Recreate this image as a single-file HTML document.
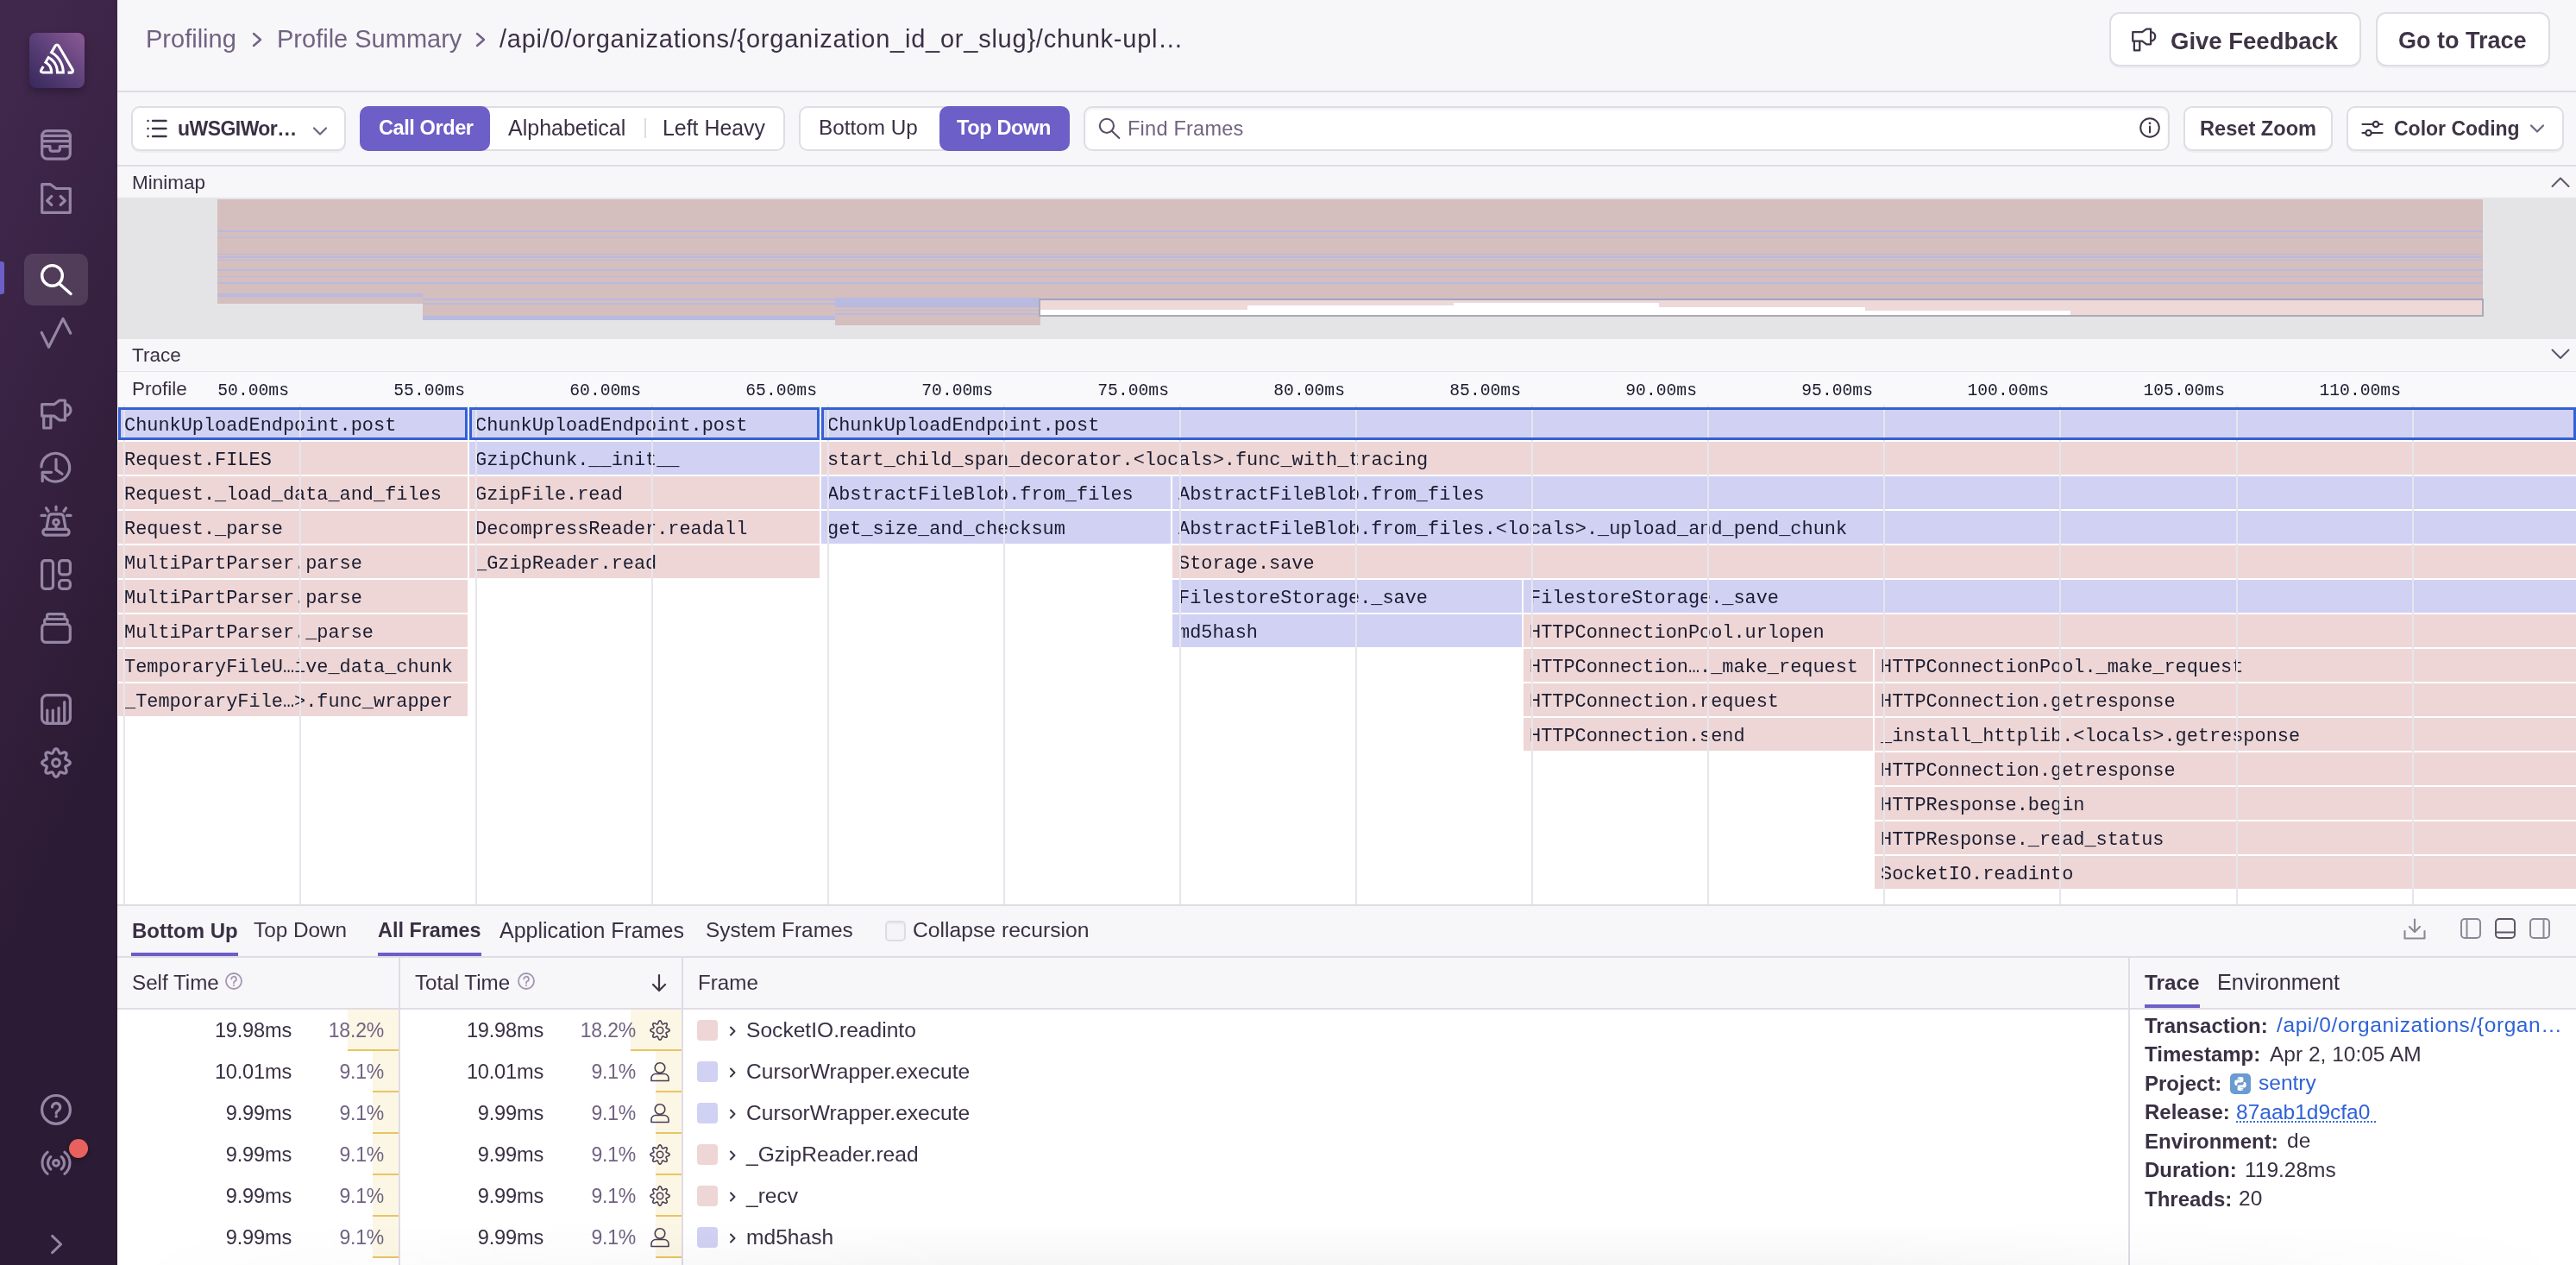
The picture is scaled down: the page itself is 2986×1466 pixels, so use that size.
<!DOCTYPE html><html><head><meta charset="utf-8"><title>Profile</title><style>
*{box-sizing:border-box;margin:0;padding:0}
html,body{width:2986px;height:1466px;overflow:hidden;background:#fff;position:relative;font-family:"Liberation Sans",sans-serif}
.a{position:absolute}
.t{position:absolute;line-height:1;white-space:nowrap;will-change:transform}
</style></head><body>
<div class="a" style="left:0px;top:0px;width:136px;height:1466px;background:linear-gradient(294.17deg,#2c1b34 35.57%,#40274c 92.42%)"></div>
<div class="a" style="left:34px;top:38px;width:64px;height:64px;border-radius:8px;background:linear-gradient(225deg,#8c5b96 0%,#5c4079 50%,#35285a 100%);box-shadow:0 4px 8px rgba(0,0,0,0.25)"></div>
<svg class="a" style="left:46px;top:50px;overflow:visible;" width="40" height="36" viewBox="0 0 50 44" fill="none"><path fill="#fff" d="M29,2.26a4.67,4.67,0,0,0-8,0L14.42,13.53A32.21,32.21,0,0,1,32.17,40.19H27.55A27.68,27.68,0,0,0,12.09,17.47L6,28a15.92,15.92,0,0,1,9.23,12.17H4.62A.76.76,0,0,1,4,39.06l2.94-5a10.74,10.74,0,0,0-3.360-1.9l-2.91,5a4.54,4.54,0,0,0,1.69,6.24A4.66,4.66,0,0,0,4.62,44H19.150a19.4,19.4,0,0,0-8-17.31l2.31-4A23.87,23.87,0,0,1,23.76,44H36.07a35.88,35.88,0,0,0-16.41-31.8l4.670-8a.77.77,0,0,1,1.05-.27c.53.29,20.29,34.77,20.66,35.170a.76.76,0,0,1-.68,1.130H40.6q.09,1.91,0,3.810h4.78A4.59,4.59,0,0,0,50,39.43a4.49,4.49,0,0,0-.62-2.28Z"/></svg>
<div class="a" style="left:28px;top:294px;width:74px;height:60px;border-radius:10px;background:rgba(255,255,255,0.12)"></div>
<div class="a" style="left:0px;top:303px;width:5px;height:38px;background:#6C5FC7;border-radius:0 3px 3px 0"></div>
<svg class="a" style="left:47px;top:150px;overflow:visible;" width="36" height="36" viewBox="0 0 36 36" fill="none"><g stroke="#9686A6" stroke-width="3.2" stroke-linecap="round" stroke-linejoin="round"><rect x="1.7" y="1.6" width="32.6" height="32.6" rx="6"/><line x1="1.7" y1="7.3" x2="34.3" y2="7.3"/><line x1="1.7" y1="13.6" x2="34.3" y2="13.6"/><path d="M1.7 19.7H11V23A2 2 0 0 0 13 25.2H20.3A2 2 0 0 0 22.3 23V19.7H34.3"/></g></svg>
<svg class="a" style="left:47px;top:212px;overflow:visible;" width="36" height="36" viewBox="0 0 36 36" fill="none"><g stroke="#9686A6" stroke-width="3.2" stroke-linecap="round" stroke-linejoin="round"><path d="M1.7 34.3V1.7H11.5L18 6.5H34.3V34.3Z"/><path d="M12.8 15.5L7.6 20.6L12.8 25.5"/><path d="M23.2 15.5L28.4 20.6L23.2 25.5"/></g></svg>
<svg class="a" style="left:47px;top:306px;overflow:visible;" width="36" height="36" viewBox="0 0 36 36" fill="none"><g stroke="#fff" stroke-width="3.4" stroke-linecap="round"><circle cx="13.5" cy="13.4" r="11.8"/><line x1="22" y1="23" x2="35" y2="34.5"/></g></svg>
<svg class="a" style="left:47px;top:368px;overflow:visible;" width="36" height="36" viewBox="0 0 36 36" fill="none"><g stroke="#9686A6" stroke-width="3.2" stroke-linecap="round" stroke-linejoin="round"><path d="M1.2 17.4L9.5 34.2L26 1.4L34.8 18.2"/></g></svg>
<svg class="a" style="left:47px;top:462px;overflow:visible;" width="36" height="36" viewBox="0 0 36 36" fill="none"><g stroke="#9686A6" stroke-width="3.2" stroke-linecap="round" stroke-linejoin="round"><path d="M1.6 6.7H15.6L22 2H28.4V24.9H22L15.6 20.1H1.6Z"/><path d="M3.7 20.1V34H11.9V20.1"/><path d="M28.4 6.6A6.6 6.6 0 0 1 28.4 19.8"/></g></svg>
<svg class="a" style="left:47px;top:524px;overflow:visible;" width="36" height="36" viewBox="0 0 36 36" fill="none"><g stroke="#9686A6" stroke-width="3.2" stroke-linecap="round" stroke-linejoin="round"><path d="M0.9 17A16.4 16.4 0 1 1 4.5 28"/><path d="M12.6 23.3H2.2V33.6"/><path d="M18 8.4V20.4L25 25.3"/></g></svg>
<svg class="a" style="left:47px;top:586px;overflow:visible;" width="36" height="36" viewBox="0 0 36 36" fill="none"><g stroke="#9686A6" stroke-width="3.2" stroke-linecap="round" stroke-linejoin="round"><rect x="2.9" y="27.3" width="30.2" height="6.8" rx="3"/><path d="M6.8 27.3L9.3 13A4 4 0 0 1 13.3 9.9H22.7A4 4 0 0 1 26.7 13L29.2 27.3"/><circle cx="18" cy="19.2" r="3.2"/><line x1="18" y1="22.4" x2="18" y2="27.3"/><line x1="18" y1="1.2" x2="18" y2="5"/><line x1="6.5" y1="2.8" x2="9" y2="6.5"/><line x1="29.5" y1="2.8" x2="27" y2="6.5"/><line x1="1" y1="11.4" x2="5.5" y2="11.4"/><line x1="30.5" y1="11.4" x2="35" y2="11.4"/></g></svg>
<svg class="a" style="left:47px;top:648px;overflow:visible;" width="36" height="36" viewBox="0 0 36 36" fill="none"><g stroke="#9686A6" stroke-width="3.2" stroke-linecap="round" stroke-linejoin="round"><rect x="1.6" y="1.6" width="12.9" height="32.7" rx="3.5"/><rect x="21.6" y="1.6" width="12.8" height="16.2" rx="3.5"/><rect x="21.6" y="24.5" width="12.8" height="9.8" rx="3.5"/></g></svg>
<svg class="a" style="left:47px;top:710px;overflow:visible;" width="36" height="36" viewBox="0 0 36 36" fill="none"><g stroke="#9686A6" stroke-width="3.2" stroke-linecap="round" stroke-linejoin="round"><rect x="1.7" y="13.5" width="32.6" height="20.8" rx="4"/><path d="M4.7 13.5V9.5A2 2 0 0 1 6.7 7.5H29.1A2 2 0 0 1 31.1 9.5V13.5"/><path d="M7.6 7.5V3.6A2 2 0 0 1 9.6 1.6H26.1A2 2 0 0 1 28.1 3.6V7.5"/></g></svg>
<svg class="a" style="left:47px;top:804px;overflow:visible;" width="36" height="36" viewBox="0 0 36 36" fill="none"><g stroke="#9686A6" stroke-width="3.2" stroke-linecap="round" stroke-linejoin="round"><rect x="1.6" y="1.6" width="32.8" height="32.8" rx="6"/><line x1="7.8" y1="19.2" x2="7.8" y2="34"/><line x1="14.3" y1="19.2" x2="14.3" y2="34"/><line x1="21.1" y1="16.3" x2="21.1" y2="34"/><line x1="27.7" y1="9.7" x2="27.7" y2="34"/></g></svg>
<svg class="a" style="left:47px;top:866px;overflow:visible;" width="36" height="36" viewBox="0 0 36 36" fill="none"><g stroke="#9686A6" stroke-width="3.2" stroke-linecap="round" stroke-linejoin="round"><path d="M18.00 1.70 L18.64 1.83 L19.24 2.19 L19.80 2.75 L20.30 3.47 L20.73 4.27 L21.10 5.08 L21.43 5.83 L21.75 6.45 L22.09 6.92 L22.48 7.19 L22.95 7.27 L23.51 7.18 L24.18 6.96 L24.94 6.67 L25.78 6.36 L26.65 6.10 L27.50 5.94 L28.30 5.94 L28.99 6.11 L29.53 6.47 L29.89 7.01 L30.06 7.70 L30.06 8.50 L29.90 9.35 L29.64 10.22 L29.33 11.06 L29.04 11.82 L28.82 12.49 L28.73 13.05 L28.81 13.52 L29.08 13.91 L29.55 14.25 L30.17 14.57 L30.92 14.90 L31.73 15.27 L32.53 15.70 L33.25 16.20 L33.81 16.76 L34.17 17.36 L34.30 18.00 L34.17 18.64 L33.81 19.24 L33.25 19.80 L32.53 20.30 L31.73 20.73 L30.92 21.10 L30.17 21.43 L29.55 21.75 L29.08 22.09 L28.81 22.48 L28.73 22.95 L28.82 23.51 L29.04 24.18 L29.33 24.94 L29.64 25.78 L29.90 26.65 L30.06 27.50 L30.06 28.30 L29.89 28.99 L29.53 29.53 L28.99 29.89 L28.30 30.06 L27.50 30.06 L26.65 29.90 L25.78 29.64 L24.94 29.33 L24.18 29.04 L23.51 28.82 L22.95 28.73 L22.48 28.81 L22.09 29.08 L21.75 29.55 L21.43 30.17 L21.10 30.92 L20.73 31.73 L20.30 32.53 L19.80 33.25 L19.24 33.81 L18.64 34.17 L18.00 34.30 L17.36 34.17 L16.76 33.81 L16.20 33.25 L15.70 32.53 L15.27 31.73 L14.90 30.92 L14.57 30.17 L14.25 29.55 L13.91 29.08 L13.52 28.81 L13.05 28.73 L12.49 28.82 L11.82 29.04 L11.06 29.33 L10.22 29.64 L9.35 29.90 L8.50 30.06 L7.70 30.06 L7.01 29.89 L6.47 29.53 L6.11 28.99 L5.94 28.30 L5.94 27.50 L6.10 26.65 L6.36 25.78 L6.67 24.94 L6.96 24.18 L7.18 23.51 L7.27 22.95 L7.19 22.48 L6.92 22.09 L6.45 21.75 L5.83 21.43 L5.08 21.10 L4.27 20.73 L3.47 20.30 L2.75 19.80 L2.19 19.24 L1.83 18.64 L1.70 18.00 L1.83 17.36 L2.19 16.76 L2.75 16.20 L3.47 15.70 L4.27 15.27 L5.08 14.90 L5.83 14.57 L6.45 14.25 L6.92 13.91 L7.19 13.52 L7.27 13.05 L7.18 12.49 L6.96 11.82 L6.67 11.06 L6.36 10.22 L6.10 9.35 L5.94 8.50 L5.94 7.70 L6.11 7.01 L6.47 6.47 L7.01 6.11 L7.70 5.94 L8.50 5.94 L9.35 6.10 L10.22 6.36 L11.06 6.67 L11.82 6.96 L12.49 7.18 L13.05 7.27 L13.52 7.19 L13.91 6.92 L14.25 6.45 L14.57 5.83 L14.90 5.08 L15.27 4.27 L15.70 3.47 L16.20 2.75 L16.76 2.19 L17.36 1.83 L18.00 1.70Z"/><circle cx="18" cy="18" r="4.3"/></g></svg>
<svg class="a" style="left:47px;top:1268px;overflow:visible;" width="36" height="36" viewBox="0 0 36 36" fill="none"><g stroke="#9686A6" stroke-width="3.2" stroke-linecap="round" stroke-linejoin="round"><circle cx="18" cy="17.9" r="16.4"/><path d="M13.5 15A4.6 4.6 0 1 1 20.6 18.9C19.3 19.8 18.2 20.6 18.2 22.3"/></g></svg>
<svg class="a" style="left:47px;top:1268px;overflow:visible;" width="36" height="36" viewBox="0 0 36 36" fill="none"><circle cx="18.2" cy="25.7" r="1.8" fill="#9686A6"/></svg>
<svg class="a" style="left:47px;top:1330px;overflow:visible;" width="36" height="36" viewBox="0 0 36 36" fill="none"><g stroke="#9686A6" stroke-width="3" stroke-linecap="round"><circle cx="18" cy="17.8" r="3.4"/><path d="M11.9 10.5A9.5 9.5 0 0 0 11.9 25.1"/><path d="M24.1 10.5A9.5 9.5 0 0 1 24.1 25.1"/><path d="M8.15 5.2A16 16 0 0 0 8.15 30.4"/><path d="M27.85 5.2A16 16 0 0 1 27.85 30.4"/></g></svg>
<div class="a" style="left:80px;top:1320px;width:22px;height:22px;border-radius:50%;background:#E8615F;box-shadow:0 2px 6px rgba(0,0,0,0.3)"></div>
<svg class="a" style="left:57px;top:1429px;overflow:visible;" width="18" height="26" viewBox="0 0 18 26" fill="none"><path d="M3.6 3.3L13.6 13L3.6 22.7" stroke="#9686A6" stroke-width="3" stroke-linecap="round" stroke-linejoin="round"/></svg>
<div class="a" style="left:136px;top:0px;width:2850px;height:105px;background:#F7F6F9"></div>
<div class="a" style="left:136px;top:105px;width:2850px;height:2px;background:#E0DCE5"></div>
<div class="t" style="top:31.35px;font-size:29px;color:#716382;font-weight:400;font-family:'Liberation Sans',sans-serif;left:169.00px;">Profiling</div>
<svg class="a" style="left:291px;top:37px;overflow:visible;" width="14" height="18" viewBox="0 0 14 18" fill="none"><path d="M3 2L11 9L3 16" stroke="#716382" stroke-width="2.4" stroke-linecap="round" stroke-linejoin="round"/></svg>
<div class="t" style="top:31.35px;font-size:29px;color:#716382;font-weight:400;font-family:'Liberation Sans',sans-serif;left:321.00px;">Profile Summary</div>
<svg class="a" style="left:550px;top:37px;overflow:visible;" width="14" height="18" viewBox="0 0 14 18" fill="none"><path d="M3 2L11 9L3 16" stroke="#716382" stroke-width="2.4" stroke-linecap="round" stroke-linejoin="round"/></svg>
<div class="t" style="top:31.35px;font-size:29px;color:#3A3044;font-weight:400;font-family:'Liberation Sans',sans-serif;letter-spacing:0.76px;left:579.00px;">/api/0/organizations/{organization_id_or_slug}/chunk-upl…</div>
<div class="a" style="left:2445px;top:14px;width:292px;height:63px;background:#fff;border:2px solid #E0DCE5;border-radius:12px;box-shadow:0 2px 0 rgba(43,34,51,0.04)"></div>
<svg class="a" style="left:2471px;top:32px;overflow:visible;" width="28" height="28" viewBox="0 0 36 36" fill="none"><g stroke="#3E3446" stroke-width="2.9" stroke-linejoin="round"><path d="M1.6 6.7H15.6L22 2H28.4V24.9H22L15.6 20.1H1.6Z"/><path d="M3.7 20.1V34H11.9V20.1"/><path d="M28.4 6.6A6.6 6.6 0 0 1 28.4 19.8"/></g></svg>
<div class="t" style="top:33.62px;font-size:27.5px;color:#3E3446;font-weight:700;font-family:'Liberation Sans',sans-serif;left:2516.00px;">Give Feedback</div>
<div class="a" style="left:2754px;top:14px;width:202px;height:63px;background:#fff;border:2px solid #E0DCE5;border-radius:12px;box-shadow:0 2px 0 rgba(43,34,51,0.04)"></div>
<div class="t" style="top:34.04px;font-size:27px;color:#3E3446;font-weight:700;font-family:'Liberation Sans',sans-serif;left:2780.00px;">Go to Trace</div>
<div class="a" style="left:136px;top:107px;width:2850px;height:84px;background:#F7F6F9"></div>
<div class="a" style="left:136px;top:191px;width:2850px;height:2px;background:#E0DCE5"></div>
<div class="a" style="left:152px;top:123px;width:249px;height:52px;background:#fff;border:2px solid #E0DCE5;border-radius:10px;box-shadow:0 2px 0 rgba(43,34,51,0.04)"></div>
<svg class="a" style="left:170px;top:138px;overflow:visible;" width="24" height="22" viewBox="0 0 24 22" fill="none"><g stroke="#3E3446" stroke-width="2.4" stroke-linecap="round"><line x1="1.5" y1="2" x2="1.6" y2="2"/><line x1="1.5" y1="11" x2="1.6" y2="11"/><line x1="1.5" y1="20" x2="1.6" y2="20"/><line x1="7" y1="2" x2="22.5" y2="2"/><line x1="7" y1="11" x2="22.5" y2="11"/><line x1="7" y1="20" x2="22.5" y2="20"/></g></svg>
<div class="t" style="top:138.43px;font-size:23px;color:#3A3044;font-weight:700;font-family:'Liberation Sans',sans-serif;letter-spacing:-0.55px;left:206.00px;">uWSGIWor…</div>
<svg class="a" style="left:362px;top:146px;overflow:visible;" width="18" height="12" viewBox="0 0 18 12" fill="none"><path d="M2 2.5L9 9.5L16 2.5" stroke="#716382" stroke-width="2.2" stroke-linecap="round" stroke-linejoin="round"/></svg>
<div class="a" style="left:417px;top:123px;width:493px;height:52px;background:#fff;border:2px solid #E0DCE5;border-radius:10px"></div>
<div class="a" style="left:417px;top:123px;width:151px;height:52px;background:#6C5FC7;border-radius:10px"></div>
<div class="t" style="top:136.52px;font-size:23.6px;color:#fff;font-weight:700;font-family:'Liberation Sans',sans-serif;letter-spacing:-0.45px;left:439.00px;">Call Order</div>
<div class="t" style="top:135.73px;font-size:25px;color:#3A3044;font-weight:400;font-family:'Liberation Sans',sans-serif;left:589.00px;">Alphabetical</div>
<div class="a" style="left:747px;top:137px;width:2px;height:23px;background:#E0DCE5"></div>
<div class="t" style="top:135.82px;font-size:24.9px;color:#3A3044;font-weight:400;font-family:'Liberation Sans',sans-serif;left:768.00px;">Left Heavy</div>
<div class="a" style="left:926px;top:123px;width:314px;height:52px;background:#fff;border:2px solid #E0DCE5;border-radius:10px"></div>
<div class="t" style="top:136.33px;font-size:24.3px;color:#3A3044;font-weight:400;font-family:'Liberation Sans',sans-serif;left:949.00px;">Bottom Up</div>
<div class="a" style="left:1089px;top:123px;width:151px;height:52px;background:#6C5FC7;border-radius:10px"></div>
<div class="t" style="top:136.52px;font-size:23.6px;color:#fff;font-weight:700;font-family:'Liberation Sans',sans-serif;letter-spacing:-0.4px;left:1109.00px;">Top Down</div>
<div class="a" style="left:1256px;top:123px;width:1259px;height:52px;background:#fff;border:2px solid #E0DCE5;border-radius:10px;box-shadow:inset 0 2px 3px rgba(43,34,51,0.06)"></div>
<svg class="a" style="left:1273px;top:136px;overflow:visible;" width="26" height="26" viewBox="0 0 26 26" fill="none"><g stroke="#5A4D66" stroke-width="2.1" stroke-linecap="round"><circle cx="9.9" cy="9.85" r="8.1"/><line x1="15.7" y1="15.7" x2="24.3" y2="24"/></g></svg>
<div class="t" style="top:137.72px;font-size:23.6px;color:#716380;font-weight:400;font-family:'Liberation Sans',sans-serif;letter-spacing:0.2px;left:1307.00px;">Find Frames</div>
<svg class="a" style="left:2480px;top:136px;overflow:visible;" width="24" height="24" viewBox="0 0 24 24" fill="none"><g stroke="#3E3446" stroke-width="2" stroke-linecap="round"><circle cx="12" cy="12" r="10.8"/><line x1="12" y1="10.5" x2="12" y2="17.5"/></g><circle cx="12" cy="6.8" r="1.4" fill="#3E3446"/></svg>
<div class="a" style="left:2531px;top:123px;width:173px;height:52px;background:#fff;border:2px solid #E0DCE5;border-radius:10px;box-shadow:0 2px 0 rgba(43,34,51,0.04)"></div>
<div class="t" style="top:137.92px;font-size:23.6px;color:#3E3446;font-weight:700;font-family:'Liberation Sans',sans-serif;left:2550.00px;">Reset Zoom</div>
<div class="a" style="left:2720px;top:123px;width:252px;height:52px;background:#fff;border:2px solid #E0DCE5;border-radius:10px;box-shadow:0 2px 0 rgba(43,34,51,0.04)"></div>
<svg class="a" style="left:2737px;top:139px;overflow:visible;" width="26" height="20" viewBox="0 0 26 20" fill="none"><g stroke="#3E3446" stroke-width="2.2" stroke-linecap="round"><line x1="1.5" y1="5" x2="24.5" y2="5"/><line x1="1.5" y1="15" x2="24.5" y2="15"/><circle cx="17" cy="5" r="3.2" fill="#fff"/><circle cx="8.5" cy="15" r="3.2" fill="#fff"/></g></svg>
<div class="t" style="top:138.43px;font-size:23px;color:#3E3446;font-weight:700;font-family:'Liberation Sans',sans-serif;left:2775.00px;">Color Coding</div>
<svg class="a" style="left:2932px;top:143px;overflow:visible;" width="18" height="12" viewBox="0 0 18 12" fill="none"><path d="M2 2.5L9 9.5L16 2.5" stroke="#716382" stroke-width="2.2" stroke-linecap="round" stroke-linejoin="round"/></svg>
<div class="a" style="left:136px;top:193px;width:2850px;height:37px;background:#F7F6F9"></div>
<div class="t" style="top:200.85px;font-size:22.5px;color:#3A3044;font-weight:400;font-family:'Liberation Sans',sans-serif;left:153.00px;">Minimap</div>
<svg class="a" style="left:2957px;top:203px;overflow:visible;" width="22" height="16" viewBox="0 0 22 16" fill="none"><path d="M1.5 13L11 3.5L20.5 13" stroke="#5F5369" stroke-width="2" stroke-linecap="round" stroke-linejoin="round"/></svg>
<div class="a" style="left:136px;top:229px;width:2850px;height:164px;background:#E4E4E6"></div>
<div class="a" style="left:252px;top:231px;width:238px;height:121px;background:#D5BEBE"></div>
<div class="a" style="left:490px;top:231px;width:478px;height:140px;background:#D5BEBE"></div>
<div class="a" style="left:968px;top:231px;width:238px;height:146px;background:#D5BEBE"></div>
<div class="a" style="left:1206px;top:231px;width:1672px;height:115px;background:#D5BEBE"></div>
<div class="a" style="left:252px;top:267px;width:2626px;height:2px;background:#B8BAE0"></div>
<div class="a" style="left:252px;top:275px;width:2626px;height:1px;background:#B8BAE0"></div>
<div class="a" style="left:252px;top:294px;width:2626px;height:1px;background:#B8BAE0"></div>
<div class="a" style="left:252px;top:297px;width:2626px;height:2px;background:#B8BAE0"></div>
<div class="a" style="left:252px;top:301px;width:2626px;height:1px;background:#B8BAE0"></div>
<div class="a" style="left:252px;top:312px;width:2626px;height:2px;background:#B8BAE0"></div>
<div class="a" style="left:252px;top:320px;width:2626px;height:1px;background:#B8BAE0"></div>
<div class="a" style="left:252px;top:327px;width:2626px;height:2px;background:#B8BAE0"></div>
<div class="a" style="left:252px;top:340px;width:238px;height:4px;background:#B8BAE0"></div>
<div class="a" style="left:490px;top:346px;width:478px;height:2px;background:#B8BAE0"></div>
<div class="a" style="left:490px;top:351px;width:478px;height:2px;background:#B8BAE0"></div>
<div class="a" style="left:490px;top:366px;width:478px;height:5px;background:#B8BAE0"></div>
<div class="a" style="left:968px;top:345px;width:238px;height:11px;background:#B8BAE0"></div>
<div class="a" style="left:968px;top:359px;width:238px;height:1px;background:#B8BAE0"></div>
<div class="a" style="left:968px;top:363px;width:238px;height:2px;background:#B8BAE0"></div>
<div class="a" style="left:1204px;top:346px;width:1675px;height:21px;background:#fff;border:2px solid #ABABB6;border-top-color:#A0A2C6"></div>
<div class="a" style="left:1206px;top:348px;width:240px;height:11px;background:#EED8D8"></div>
<div class="a" style="left:1446px;top:348px;width:239px;height:6px;background:#EED8D8"></div>
<div class="a" style="left:1685px;top:348px;width:238px;height:3px;background:#EED8D8"></div>
<div class="a" style="left:1923px;top:348px;width:239px;height:8px;background:#EED8D8"></div>
<div class="a" style="left:2162px;top:348px;width:238px;height:12px;background:#EED8D8"></div>
<div class="a" style="left:2400px;top:348px;width:477px;height:17px;background:#EED8D8"></div>
<div class="a" style="left:136px;top:393px;width:2850px;height:37px;background:#F7F6F9"></div>
<div class="t" style="top:400.85px;font-size:22.5px;color:#3A3044;font-weight:400;font-family:'Liberation Sans',sans-serif;left:153.00px;">Trace</div>
<svg class="a" style="left:2957px;top:403px;overflow:visible;" width="22" height="16" viewBox="0 0 22 16" fill="none"><path d="M1.5 2.5L11 12L20.5 2.5" stroke="#5F5369" stroke-width="2" stroke-linecap="round" stroke-linejoin="round"/></svg>
<div class="a" style="left:136px;top:430px;width:2850px;height:1px;background:#E6E3EA"></div>
<div class="a" style="left:136px;top:431px;width:2850px;height:41px;background:#F9F8FA"></div>
<div class="t" style="top:439.85px;font-size:22.5px;color:#3A3044;font-weight:400;font-family:'Liberation Sans',sans-serif;left:153.00px;">Profile</div>
<div class="t" style="top:443.81px;font-size:19.7px;color:#1B1C30;font-weight:400;font-family:'Liberation Mono',monospace;left:-1165.15px;width:1500px;text-align:right;">50.00ms</div>
<div class="t" style="top:443.81px;font-size:19.7px;color:#1B1C30;font-weight:400;font-family:'Liberation Mono',monospace;left:-961.10px;width:1500px;text-align:right;">55.00ms</div>
<div class="t" style="top:443.81px;font-size:19.7px;color:#1B1C30;font-weight:400;font-family:'Liberation Mono',monospace;left:-757.05px;width:1500px;text-align:right;">60.00ms</div>
<div class="t" style="top:443.81px;font-size:19.7px;color:#1B1C30;font-weight:400;font-family:'Liberation Mono',monospace;left:-553.00px;width:1500px;text-align:right;">65.00ms</div>
<div class="t" style="top:443.81px;font-size:19.7px;color:#1B1C30;font-weight:400;font-family:'Liberation Mono',monospace;left:-348.95px;width:1500px;text-align:right;">70.00ms</div>
<div class="t" style="top:443.81px;font-size:19.7px;color:#1B1C30;font-weight:400;font-family:'Liberation Mono',monospace;left:-144.90px;width:1500px;text-align:right;">75.00ms</div>
<div class="t" style="top:443.81px;font-size:19.7px;color:#1B1C30;font-weight:400;font-family:'Liberation Mono',monospace;left:59.15px;width:1500px;text-align:right;">80.00ms</div>
<div class="t" style="top:443.81px;font-size:19.7px;color:#1B1C30;font-weight:400;font-family:'Liberation Mono',monospace;left:263.20px;width:1500px;text-align:right;">85.00ms</div>
<div class="t" style="top:443.81px;font-size:19.7px;color:#1B1C30;font-weight:400;font-family:'Liberation Mono',monospace;left:467.25px;width:1500px;text-align:right;">90.00ms</div>
<div class="t" style="top:443.81px;font-size:19.7px;color:#1B1C30;font-weight:400;font-family:'Liberation Mono',monospace;left:671.30px;width:1500px;text-align:right;">95.00ms</div>
<div class="t" style="top:443.81px;font-size:19.7px;color:#1B1C30;font-weight:400;font-family:'Liberation Mono',monospace;left:875.35px;width:1500px;text-align:right;">100.00ms</div>
<div class="t" style="top:443.81px;font-size:19.7px;color:#1B1C30;font-weight:400;font-family:'Liberation Mono',monospace;left:1079.40px;width:1500px;text-align:right;">105.00ms</div>
<div class="t" style="top:443.81px;font-size:19.7px;color:#1B1C30;font-weight:400;font-family:'Liberation Mono',monospace;left:1283.45px;width:1500px;text-align:right;">110.00ms</div>
<div class="a" style="left:136px;top:472px;width:2850px;height:576px;background:#fff"></div>
<div class="a" style="left:137px;top:472px;width:405px;height:38px;background:#D0D1F3;overflow:hidden"><div class="t" style="left:7.4px;top:11.32px;font-family:'Liberation Mono',monospace;font-size:21.9px;color:#1B1C30">ChunkUploadEndpoint.post</div></div>
<div class="a" style="left:544px;top:472px;width:406px;height:38px;background:#D0D1F3;overflow:hidden"><div class="t" style="left:7.4px;top:11.32px;font-family:'Liberation Mono',monospace;font-size:21.9px;color:#1B1C30">ChunkUploadEndpoint.post</div></div>
<div class="a" style="left:952px;top:472px;width:2034px;height:38px;background:#D0D1F3;overflow:hidden"><div class="t" style="left:7.4px;top:11.32px;font-family:'Liberation Mono',monospace;font-size:21.9px;color:#1B1C30">ChunkUploadEndpoint.post</div></div>
<div class="a" style="left:137px;top:512px;width:405px;height:38px;background:#EED6D6;overflow:hidden"><div class="t" style="left:7.4px;top:11.32px;font-family:'Liberation Mono',monospace;font-size:21.9px;color:#1B1C30">Request.FILES</div></div>
<div class="a" style="left:137px;top:552px;width:405px;height:38px;background:#EED6D6;overflow:hidden"><div class="t" style="left:7.4px;top:11.32px;font-family:'Liberation Mono',monospace;font-size:21.9px;color:#1B1C30">Request._load_data_and_files</div></div>
<div class="a" style="left:137px;top:592px;width:405px;height:38px;background:#EED6D6;overflow:hidden"><div class="t" style="left:7.4px;top:11.32px;font-family:'Liberation Mono',monospace;font-size:21.9px;color:#1B1C30">Request._parse</div></div>
<div class="a" style="left:137px;top:632px;width:405px;height:38px;background:#EED6D6;overflow:hidden"><div class="t" style="left:7.4px;top:11.32px;font-family:'Liberation Mono',monospace;font-size:21.9px;color:#1B1C30">MultiPartParser.parse</div></div>
<div class="a" style="left:137px;top:672px;width:405px;height:38px;background:#EED6D6;overflow:hidden"><div class="t" style="left:7.4px;top:11.32px;font-family:'Liberation Mono',monospace;font-size:21.9px;color:#1B1C30">MultiPartParser.parse</div></div>
<div class="a" style="left:137px;top:712px;width:405px;height:38px;background:#EED6D6;overflow:hidden"><div class="t" style="left:7.4px;top:11.32px;font-family:'Liberation Mono',monospace;font-size:21.9px;color:#1B1C30">MultiPartParser._parse</div></div>
<div class="a" style="left:137px;top:752px;width:405px;height:38px;background:#EED6D6;overflow:hidden"><div class="t" style="left:7.4px;top:11.32px;font-family:'Liberation Mono',monospace;font-size:21.9px;color:#1B1C30">TemporaryFileU…ive_data_chunk</div></div>
<div class="a" style="left:137px;top:792px;width:405px;height:38px;background:#EED6D6;overflow:hidden"><div class="t" style="left:7.4px;top:11.32px;font-family:'Liberation Mono',monospace;font-size:21.9px;color:#1B1C30">_TemporaryFile…&gt;.func_wrapper</div></div>
<div class="a" style="left:544px;top:512px;width:406px;height:38px;background:#D0D1F3;overflow:hidden"><div class="t" style="left:7.4px;top:11.32px;font-family:'Liberation Mono',monospace;font-size:21.9px;color:#1B1C30">GzipChunk.__init__</div></div>
<div class="a" style="left:544px;top:552px;width:406px;height:38px;background:#EED6D6;overflow:hidden"><div class="t" style="left:7.4px;top:11.32px;font-family:'Liberation Mono',monospace;font-size:21.9px;color:#1B1C30">GzipFile.read</div></div>
<div class="a" style="left:544px;top:592px;width:406px;height:38px;background:#EED6D6;overflow:hidden"><div class="t" style="left:7.4px;top:11.32px;font-family:'Liberation Mono',monospace;font-size:21.9px;color:#1B1C30">DecompressReader.readall</div></div>
<div class="a" style="left:544px;top:632px;width:406px;height:38px;background:#EED6D6;overflow:hidden"><div class="t" style="left:7.4px;top:11.32px;font-family:'Liberation Mono',monospace;font-size:21.9px;color:#1B1C30">_GzipReader.read</div></div>
<div class="a" style="left:952px;top:512px;width:2034px;height:38px;background:#EED6D6;overflow:hidden"><div class="t" style="left:7.4px;top:11.32px;font-family:'Liberation Mono',monospace;font-size:21.9px;color:#1B1C30">start_child_span_decorator.&lt;locals&gt;.func_with_tracing</div></div>
<div class="a" style="left:952px;top:552px;width:405px;height:38px;background:#D0D1F3;overflow:hidden"><div class="t" style="left:7.4px;top:11.32px;font-family:'Liberation Mono',monospace;font-size:21.9px;color:#1B1C30">AbstractFileBlob.from_files</div></div>
<div class="a" style="left:952px;top:592px;width:405px;height:38px;background:#D0D1F3;overflow:hidden"><div class="t" style="left:7.4px;top:11.32px;font-family:'Liberation Mono',monospace;font-size:21.9px;color:#1B1C30">get_size_and_checksum</div></div>
<div class="a" style="left:1359px;top:552px;width:1627px;height:38px;background:#D0D1F3;overflow:hidden"><div class="t" style="left:7.4px;top:11.32px;font-family:'Liberation Mono',monospace;font-size:21.9px;color:#1B1C30">AbstractFileBlob.from_files</div></div>
<div class="a" style="left:1359px;top:592px;width:1627px;height:38px;background:#D0D1F3;overflow:hidden"><div class="t" style="left:7.4px;top:11.32px;font-family:'Liberation Mono',monospace;font-size:21.9px;color:#1B1C30">AbstractFileBlob.from_files.&lt;locals&gt;._upload_and_pend_chunk</div></div>
<div class="a" style="left:1359px;top:632px;width:1627px;height:38px;background:#EED6D6;overflow:hidden"><div class="t" style="left:7.4px;top:11.32px;font-family:'Liberation Mono',monospace;font-size:21.9px;color:#1B1C30">Storage.save</div></div>
<div class="a" style="left:1359px;top:672px;width:405px;height:38px;background:#D0D1F3;overflow:hidden"><div class="t" style="left:7.4px;top:11.32px;font-family:'Liberation Mono',monospace;font-size:21.9px;color:#1B1C30">FilestoreStorage._save</div></div>
<div class="a" style="left:1359px;top:712px;width:405px;height:38px;background:#D0D1F3;overflow:hidden"><div class="t" style="left:7.4px;top:11.32px;font-family:'Liberation Mono',monospace;font-size:21.9px;color:#1B1C30">md5hash</div></div>
<div class="a" style="left:1766px;top:672px;width:1220px;height:38px;background:#D0D1F3;overflow:hidden"><div class="t" style="left:7.4px;top:11.32px;font-family:'Liberation Mono',monospace;font-size:21.9px;color:#1B1C30">FilestoreStorage._save</div></div>
<div class="a" style="left:1766px;top:712px;width:1220px;height:38px;background:#EED6D6;overflow:hidden"><div class="t" style="left:7.4px;top:11.32px;font-family:'Liberation Mono',monospace;font-size:21.9px;color:#1B1C30">HTTPConnectionPool.urlopen</div></div>
<div class="a" style="left:1766px;top:752px;width:405px;height:38px;background:#EED6D6;overflow:hidden"><div class="t" style="left:7.4px;top:11.32px;font-family:'Liberation Mono',monospace;font-size:21.9px;color:#1B1C30">HTTPConnection…._make_request</div></div>
<div class="a" style="left:1766px;top:792px;width:405px;height:38px;background:#EED6D6;overflow:hidden"><div class="t" style="left:7.4px;top:11.32px;font-family:'Liberation Mono',monospace;font-size:21.9px;color:#1B1C30">HTTPConnection.request</div></div>
<div class="a" style="left:1766px;top:832px;width:405px;height:38px;background:#EED6D6;overflow:hidden"><div class="t" style="left:7.4px;top:11.32px;font-family:'Liberation Mono',monospace;font-size:21.9px;color:#1B1C30">HTTPConnection.send</div></div>
<div class="a" style="left:2173px;top:752px;width:813px;height:38px;background:#EED6D6;overflow:hidden"><div class="t" style="left:7.4px;top:11.32px;font-family:'Liberation Mono',monospace;font-size:21.9px;color:#1B1C30">HTTPConnectionPool._make_request</div></div>
<div class="a" style="left:2173px;top:792px;width:813px;height:38px;background:#EED6D6;overflow:hidden"><div class="t" style="left:7.4px;top:11.32px;font-family:'Liberation Mono',monospace;font-size:21.9px;color:#1B1C30">HTTPConnection.getresponse</div></div>
<div class="a" style="left:2173px;top:832px;width:813px;height:38px;background:#EED6D6;overflow:hidden"><div class="t" style="left:7.4px;top:11.32px;font-family:'Liberation Mono',monospace;font-size:21.9px;color:#1B1C30">_install_httplib.&lt;locals&gt;.getresponse</div></div>
<div class="a" style="left:2173px;top:872px;width:813px;height:38px;background:#EED6D6;overflow:hidden"><div class="t" style="left:7.4px;top:11.32px;font-family:'Liberation Mono',monospace;font-size:21.9px;color:#1B1C30">HTTPConnection.getresponse</div></div>
<div class="a" style="left:2173px;top:912px;width:813px;height:38px;background:#EED6D6;overflow:hidden"><div class="t" style="left:7.4px;top:11.32px;font-family:'Liberation Mono',monospace;font-size:21.9px;color:#1B1C30">HTTPResponse.begin</div></div>
<div class="a" style="left:2173px;top:952px;width:813px;height:38px;background:#EED6D6;overflow:hidden"><div class="t" style="left:7.4px;top:11.32px;font-family:'Liberation Mono',monospace;font-size:21.9px;color:#1B1C30">HTTPResponse._read_status</div></div>
<div class="a" style="left:2173px;top:992px;width:813px;height:38px;background:#EED6D6;overflow:hidden"><div class="t" style="left:7.4px;top:11.32px;font-family:'Liberation Mono',monospace;font-size:21.9px;color:#1B1C30">SocketIO.readinto</div></div>
<div class="a" style="left:143px;top:470px;width:2px;height:578px;background:#E5E6EC"></div>
<div class="a" style="left:347px;top:470px;width:2px;height:578px;background:#E5E6EC"></div>
<div class="a" style="left:551px;top:470px;width:2px;height:578px;background:#E5E6EC"></div>
<div class="a" style="left:755px;top:470px;width:2px;height:578px;background:#E5E6EC"></div>
<div class="a" style="left:959px;top:470px;width:2px;height:578px;background:#E5E6EC"></div>
<div class="a" style="left:1163px;top:470px;width:2px;height:578px;background:#E5E6EC"></div>
<div class="a" style="left:1367px;top:470px;width:2px;height:578px;background:#E5E6EC"></div>
<div class="a" style="left:1571px;top:470px;width:2px;height:578px;background:#E5E6EC"></div>
<div class="a" style="left:1775px;top:470px;width:2px;height:578px;background:#E5E6EC"></div>
<div class="a" style="left:1979px;top:470px;width:2px;height:578px;background:#E5E6EC"></div>
<div class="a" style="left:2183px;top:470px;width:2px;height:578px;background:#E5E6EC"></div>
<div class="a" style="left:2387px;top:470px;width:2px;height:578px;background:#E5E6EC"></div>
<div class="a" style="left:2592px;top:470px;width:2px;height:578px;background:#E5E6EC"></div>
<div class="a" style="left:2796px;top:470px;width:2px;height:578px;background:#E5E6EC"></div>
<div class="a" style="left:137px;top:472px;width:405px;height:38px;border:3px solid #3461D3"></div>
<div class="a" style="left:544px;top:472px;width:406px;height:38px;border:3px solid #3461D3"></div>
<div class="a" style="left:952px;top:472px;width:2034px;height:38px;border:3px solid #3461D3"></div>
<div class="a" style="left:136px;top:1048px;width:2850px;height:2px;background:#E0DCE5"></div>
<div class="a" style="left:136px;top:1050px;width:2850px;height:58px;background:#F7F6F9"></div>
<div class="a" style="left:136px;top:1108px;width:2850px;height:2px;background:#E0DCE5"></div>
<div class="t" style="top:1066.58px;font-size:24px;color:#3A3044;font-weight:700;font-family:'Liberation Sans',sans-serif;left:153.00px;">Bottom Up</div>
<div class="a" style="left:152px;top:1104px;width:124px;height:4px;background:#6C5FC7"></div>
<div class="t" style="top:1066.33px;font-size:24.3px;color:#3A3044;font-weight:400;font-family:'Liberation Sans',sans-serif;left:294.00px;">Top Down</div>
<div class="t" style="top:1067.09px;font-size:23.4px;color:#3A3044;font-weight:700;font-family:'Liberation Sans',sans-serif;left:438.00px;">All Frames</div>
<div class="a" style="left:438px;top:1104px;width:120px;height:4px;background:#6C5FC7"></div>
<div class="t" style="top:1065.73px;font-size:25px;color:#3A3044;font-weight:400;font-family:'Liberation Sans',sans-serif;left:579.00px;">Application Frames</div>
<div class="t" style="top:1066.24px;font-size:24.4px;color:#3A3044;font-weight:400;font-family:'Liberation Sans',sans-serif;left:818.00px;">System Frames</div>
<div class="a" style="left:1026px;top:1067px;width:24px;height:24px;background:#F5F4F7;border:2px solid #E0DCE5;border-radius:5px;box-shadow:inset 0 2px 2px rgba(43,34,51,0.05)"></div>
<div class="t" style="top:1065.99px;font-size:24.7px;color:#3A3044;font-weight:400;font-family:'Liberation Sans',sans-serif;left:1058.00px;">Collapse recursion</div>
<svg class="a" style="left:2786px;top:1064px;overflow:visible;" width="26" height="26" viewBox="0 0 26 26" fill="none"><g stroke="#8D8896" stroke-width="2.1" stroke-linecap="round" stroke-linejoin="round"><path d="M13 1.5V16"/><path d="M7 10L13 16L19 10"/><path d="M1.5 15V23.5H24.5V15"/></g></svg>
<svg class="a" style="left:2852px;top:1064px;overflow:visible;" width="24" height="24" viewBox="0 0 24 24" fill="none"><g stroke="#8D8896" stroke-width="2"><rect x="1" y="1" width="22" height="22" rx="4"/><line x1="7.5" y1="1" x2="7.5" y2="23"/></g></svg>
<svg class="a" style="left:2892px;top:1064px;overflow:visible;" width="24" height="24" viewBox="0 0 24 24" fill="none"><g stroke="#5E5668" stroke-width="2"><rect x="1" y="1" width="22" height="22" rx="4"/><line x1="1" y1="16.5" x2="23" y2="16.5"/></g></svg>
<svg class="a" style="left:2932px;top:1064px;overflow:visible;" width="24" height="24" viewBox="0 0 24 24" fill="none"><g stroke="#8D8896" stroke-width="2"><rect x="1" y="1" width="22" height="22" rx="4"/><line x1="16.5" y1="1" x2="16.5" y2="23"/></g></svg>
<div class="a" style="left:136px;top:1110px;width:2332px;height:58px;background:#F7F6F9"></div>
<div class="a" style="left:2470px;top:1110px;width:516px;height:58px;background:#F7F6F9"></div>
<div class="a" style="left:136px;top:1168px;width:2850px;height:2px;background:#E0DCE5"></div>
<div class="t" style="top:1127.41px;font-size:24.2px;color:#3A3044;font-weight:400;font-family:'Liberation Sans',sans-serif;left:153.00px;">Self Time</div>
<svg class="a" style="left:261px;top:1127px;overflow:visible;" width="20" height="20" viewBox="0 0 20 20" fill="none"><g stroke="#A497B3" stroke-width="1.8" stroke-linecap="round"><circle cx="10" cy="10" r="9"/><path d="M7.3 7.6A2.8 2.8 0 1 1 11 10.2C10.3 10.6 10 11 10 12V12.4"/></g><circle cx="10" cy="15" r="1.1" fill="#A497B3"/></svg>
<div class="t" style="top:1127.41px;font-size:24.2px;color:#3A3044;font-weight:400;font-family:'Liberation Sans',sans-serif;left:481.00px;">Total Time</div>
<svg class="a" style="left:600px;top:1127px;overflow:visible;" width="20" height="20" viewBox="0 0 20 20" fill="none"><g stroke="#A497B3" stroke-width="1.8" stroke-linecap="round"><circle cx="10" cy="10" r="9"/><path d="M7.3 7.6A2.8 2.8 0 1 1 11 10.2C10.3 10.6 10 11 10 12V12.4"/></g><circle cx="10" cy="15" r="1.1" fill="#A497B3"/></svg>
<svg class="a" style="left:754px;top:1128px;overflow:visible;" width="20" height="22" viewBox="0 0 20 22" fill="none"><g stroke="#3E3446" stroke-width="2.2" stroke-linecap="round" stroke-linejoin="round"><line x1="10" y1="2" x2="10" y2="20"/><path d="M3 13L10 20L17 13"/></g></svg>
<div class="t" style="top:1127.41px;font-size:24.2px;color:#3A3044;font-weight:400;font-family:'Liberation Sans',sans-serif;left:809.00px;">Frame</div>
<div class="a" style="left:462px;top:1110px;width:2px;height:356px;background:#E0DCE5"></div>
<div class="a" style="left:790px;top:1110px;width:2px;height:356px;background:#E0DCE5"></div>
<div class="a" style="left:2467px;top:1110px;width:2px;height:356px;background:#E0DCE5"></div>
<div class="a" style="left:402.6px;top:1170px;width:59.39999999999998px;height:48px;background:#FCF6E5"></div>
<div class="a" style="left:402.6px;top:1216px;width:59.39999999999998px;height:2px;background:#E9C462"></div>
<div class="a" style="left:731px;top:1170px;width:59px;height:48px;background:#FCF6E5"></div>
<div class="a" style="left:731px;top:1216px;width:59px;height:2px;background:#E9C462"></div>
<div class="t" style="top:1182.92px;font-size:23.6px;color:#3A3044;font-weight:400;font-family:'Liberation Sans',sans-serif;letter-spacing:-0.2px;left:-1162.00px;width:1500px;text-align:right;">19.98ms</div>
<div class="t" style="top:1183.43px;font-size:23px;color:#716382;font-weight:400;font-family:'Liberation Sans',sans-serif;letter-spacing:-0.2px;left:-1055.00px;width:1500px;text-align:right;">18.2%</div>
<div class="t" style="top:1182.92px;font-size:23.6px;color:#3A3044;font-weight:400;font-family:'Liberation Sans',sans-serif;letter-spacing:-0.2px;left:-870.00px;width:1500px;text-align:right;">19.98ms</div>
<div class="t" style="top:1183.43px;font-size:23px;color:#716382;font-weight:400;font-family:'Liberation Sans',sans-serif;letter-spacing:-0.2px;left:-763.00px;width:1500px;text-align:right;">18.2%</div>
<svg class="a" style="left:752.5px;top:1182px;overflow:visible;" width="24" height="24" viewBox="0 0 24 24" fill="none"><g stroke="#4A3F55" stroke-width="1.6" stroke-linejoin="round"><path d="M12.00 0.85 L12.43 0.94 L12.85 1.22 L13.23 1.64 L13.56 2.18 L13.83 2.78 L14.07 3.39 L14.27 3.94 L14.47 4.41 L14.68 4.74 L14.93 4.93 L15.24 4.97 L15.62 4.89 L16.09 4.70 L16.63 4.45 L17.22 4.18 L17.84 3.96 L18.46 3.81 L19.02 3.78 L19.51 3.88 L19.88 4.12 L20.12 4.49 L20.22 4.98 L20.19 5.54 L20.04 6.16 L19.82 6.78 L19.55 7.37 L19.30 7.91 L19.11 8.38 L19.03 8.76 L19.07 9.07 L19.26 9.32 L19.59 9.53 L20.06 9.73 L20.61 9.93 L21.22 10.17 L21.82 10.44 L22.36 10.77 L22.78 11.15 L23.06 11.57 L23.15 12.00 L23.06 12.43 L22.78 12.85 L22.36 13.23 L21.82 13.56 L21.22 13.83 L20.61 14.07 L20.06 14.27 L19.59 14.47 L19.26 14.68 L19.07 14.93 L19.03 15.24 L19.11 15.62 L19.30 16.09 L19.55 16.63 L19.82 17.22 L20.04 17.84 L20.19 18.46 L20.22 19.02 L20.12 19.51 L19.88 19.88 L19.51 20.12 L19.02 20.22 L18.46 20.19 L17.84 20.04 L17.22 19.82 L16.63 19.55 L16.09 19.30 L15.62 19.11 L15.24 19.03 L14.93 19.07 L14.68 19.26 L14.47 19.59 L14.27 20.06 L14.07 20.61 L13.83 21.22 L13.56 21.82 L13.23 22.36 L12.85 22.78 L12.43 23.06 L12.00 23.15 L11.57 23.06 L11.15 22.78 L10.77 22.36 L10.44 21.82 L10.17 21.22 L9.93 20.61 L9.73 20.06 L9.53 19.59 L9.32 19.26 L9.07 19.07 L8.76 19.03 L8.38 19.11 L7.91 19.30 L7.37 19.55 L6.78 19.82 L6.16 20.04 L5.54 20.19 L4.98 20.22 L4.49 20.12 L4.12 19.88 L3.88 19.51 L3.78 19.02 L3.81 18.46 L3.96 17.84 L4.18 17.22 L4.45 16.63 L4.70 16.09 L4.89 15.62 L4.97 15.24 L4.93 14.93 L4.74 14.68 L4.41 14.47 L3.94 14.27 L3.39 14.07 L2.78 13.83 L2.18 13.56 L1.64 13.23 L1.22 12.85 L0.94 12.43 L0.85 12.00 L0.94 11.57 L1.22 11.15 L1.64 10.77 L2.18 10.44 L2.78 10.17 L3.39 9.93 L3.94 9.73 L4.41 9.53 L4.74 9.32 L4.93 9.07 L4.97 8.76 L4.89 8.38 L4.70 7.91 L4.45 7.37 L4.18 6.78 L3.96 6.16 L3.81 5.54 L3.78 4.98 L3.88 4.49 L4.12 4.12 L4.49 3.88 L4.98 3.78 L5.54 3.81 L6.16 3.96 L6.78 4.18 L7.37 4.45 L7.91 4.70 L8.38 4.89 L8.76 4.97 L9.07 4.93 L9.32 4.74 L9.53 4.41 L9.73 3.94 L9.93 3.39 L10.17 2.78 L10.44 2.18 L10.77 1.64 L11.15 1.22 L11.57 0.94 L12.00 0.85Z"/><circle cx="12" cy="12" r="3.7"/></g></svg>
<div class="a" style="left:808px;top:1182px;width:24px;height:24px;background:#EED6D6;border-radius:4px"></div>
<svg class="a" style="left:844px;top:1188px;overflow:visible;" width="10" height="14" viewBox="0 0 10 14" fill="none"><path d="M3 2.5L7.5 7L3 11.5" stroke="#3E3446" stroke-width="2" stroke-linecap="round" stroke-linejoin="round"/></svg>
<div class="t" style="top:1182.07px;font-size:24.6px;color:#3A3044;font-weight:400;font-family:'Liberation Sans',sans-serif;left:864.50px;">SocketIO.readinto</div>
<div class="a" style="left:432px;top:1218px;width:30px;height:48px;background:#FCF6E5"></div>
<div class="a" style="left:432px;top:1264px;width:30px;height:2px;background:#E9C462"></div>
<div class="a" style="left:760px;top:1218px;width:30px;height:48px;background:#FCF6E5"></div>
<div class="a" style="left:760px;top:1264px;width:30px;height:2px;background:#E9C462"></div>
<div class="t" style="top:1230.92px;font-size:23.6px;color:#3A3044;font-weight:400;font-family:'Liberation Sans',sans-serif;letter-spacing:-0.2px;left:-1162.00px;width:1500px;text-align:right;">10.01ms</div>
<div class="t" style="top:1231.43px;font-size:23px;color:#716382;font-weight:400;font-family:'Liberation Sans',sans-serif;letter-spacing:-0.2px;left:-1055.00px;width:1500px;text-align:right;">9.1%</div>
<div class="t" style="top:1230.92px;font-size:23.6px;color:#3A3044;font-weight:400;font-family:'Liberation Sans',sans-serif;letter-spacing:-0.2px;left:-870.00px;width:1500px;text-align:right;">10.01ms</div>
<div class="t" style="top:1231.43px;font-size:23px;color:#716382;font-weight:400;font-family:'Liberation Sans',sans-serif;letter-spacing:-0.2px;left:-763.00px;width:1500px;text-align:right;">9.1%</div>
<svg class="a" style="left:752.5px;top:1230px;overflow:visible;" width="24" height="24" viewBox="0 0 24 24" fill="none"><g stroke="#4A3F55" stroke-width="1.6" stroke-linejoin="round"><circle cx="12" cy="7.5" r="5.8"/><path d="M2 22.5V19.5A5 5 0 0 1 7 14.5H17A5 5 0 0 1 22 19.5V22.5Z"/></g></svg>
<div class="a" style="left:808px;top:1230px;width:24px;height:24px;background:#D0D1F3;border-radius:4px"></div>
<svg class="a" style="left:844px;top:1236px;overflow:visible;" width="10" height="14" viewBox="0 0 10 14" fill="none"><path d="M3 2.5L7.5 7L3 11.5" stroke="#3E3446" stroke-width="2" stroke-linecap="round" stroke-linejoin="round"/></svg>
<div class="t" style="top:1230.07px;font-size:24.6px;color:#3A3044;font-weight:400;font-family:'Liberation Sans',sans-serif;left:864.50px;">CursorWrapper.execute</div>
<div class="a" style="left:432px;top:1266px;width:30px;height:48px;background:#FCF6E5"></div>
<div class="a" style="left:432px;top:1312px;width:30px;height:2px;background:#E9C462"></div>
<div class="a" style="left:760px;top:1266px;width:30px;height:48px;background:#FCF6E5"></div>
<div class="a" style="left:760px;top:1312px;width:30px;height:2px;background:#E9C462"></div>
<div class="t" style="top:1278.92px;font-size:23.6px;color:#3A3044;font-weight:400;font-family:'Liberation Sans',sans-serif;letter-spacing:-0.2px;left:-1162.00px;width:1500px;text-align:right;">9.99ms</div>
<div class="t" style="top:1279.43px;font-size:23px;color:#716382;font-weight:400;font-family:'Liberation Sans',sans-serif;letter-spacing:-0.2px;left:-1055.00px;width:1500px;text-align:right;">9.1%</div>
<div class="t" style="top:1278.92px;font-size:23.6px;color:#3A3044;font-weight:400;font-family:'Liberation Sans',sans-serif;letter-spacing:-0.2px;left:-870.00px;width:1500px;text-align:right;">9.99ms</div>
<div class="t" style="top:1279.43px;font-size:23px;color:#716382;font-weight:400;font-family:'Liberation Sans',sans-serif;letter-spacing:-0.2px;left:-763.00px;width:1500px;text-align:right;">9.1%</div>
<svg class="a" style="left:752.5px;top:1278px;overflow:visible;" width="24" height="24" viewBox="0 0 24 24" fill="none"><g stroke="#4A3F55" stroke-width="1.6" stroke-linejoin="round"><circle cx="12" cy="7.5" r="5.8"/><path d="M2 22.5V19.5A5 5 0 0 1 7 14.5H17A5 5 0 0 1 22 19.5V22.5Z"/></g></svg>
<div class="a" style="left:808px;top:1278px;width:24px;height:24px;background:#D0D1F3;border-radius:4px"></div>
<svg class="a" style="left:844px;top:1284px;overflow:visible;" width="10" height="14" viewBox="0 0 10 14" fill="none"><path d="M3 2.5L7.5 7L3 11.5" stroke="#3E3446" stroke-width="2" stroke-linecap="round" stroke-linejoin="round"/></svg>
<div class="t" style="top:1278.07px;font-size:24.6px;color:#3A3044;font-weight:400;font-family:'Liberation Sans',sans-serif;left:864.50px;">CursorWrapper.execute</div>
<div class="a" style="left:432px;top:1314px;width:30px;height:48px;background:#FCF6E5"></div>
<div class="a" style="left:432px;top:1360px;width:30px;height:2px;background:#E9C462"></div>
<div class="a" style="left:760px;top:1314px;width:30px;height:48px;background:#FCF6E5"></div>
<div class="a" style="left:760px;top:1360px;width:30px;height:2px;background:#E9C462"></div>
<div class="t" style="top:1326.92px;font-size:23.6px;color:#3A3044;font-weight:400;font-family:'Liberation Sans',sans-serif;letter-spacing:-0.2px;left:-1162.00px;width:1500px;text-align:right;">9.99ms</div>
<div class="t" style="top:1327.43px;font-size:23px;color:#716382;font-weight:400;font-family:'Liberation Sans',sans-serif;letter-spacing:-0.2px;left:-1055.00px;width:1500px;text-align:right;">9.1%</div>
<div class="t" style="top:1326.92px;font-size:23.6px;color:#3A3044;font-weight:400;font-family:'Liberation Sans',sans-serif;letter-spacing:-0.2px;left:-870.00px;width:1500px;text-align:right;">9.99ms</div>
<div class="t" style="top:1327.43px;font-size:23px;color:#716382;font-weight:400;font-family:'Liberation Sans',sans-serif;letter-spacing:-0.2px;left:-763.00px;width:1500px;text-align:right;">9.1%</div>
<svg class="a" style="left:752.5px;top:1326px;overflow:visible;" width="24" height="24" viewBox="0 0 24 24" fill="none"><g stroke="#4A3F55" stroke-width="1.6" stroke-linejoin="round"><path d="M12.00 0.85 L12.43 0.94 L12.85 1.22 L13.23 1.64 L13.56 2.18 L13.83 2.78 L14.07 3.39 L14.27 3.94 L14.47 4.41 L14.68 4.74 L14.93 4.93 L15.24 4.97 L15.62 4.89 L16.09 4.70 L16.63 4.45 L17.22 4.18 L17.84 3.96 L18.46 3.81 L19.02 3.78 L19.51 3.88 L19.88 4.12 L20.12 4.49 L20.22 4.98 L20.19 5.54 L20.04 6.16 L19.82 6.78 L19.55 7.37 L19.30 7.91 L19.11 8.38 L19.03 8.76 L19.07 9.07 L19.26 9.32 L19.59 9.53 L20.06 9.73 L20.61 9.93 L21.22 10.17 L21.82 10.44 L22.36 10.77 L22.78 11.15 L23.06 11.57 L23.15 12.00 L23.06 12.43 L22.78 12.85 L22.36 13.23 L21.82 13.56 L21.22 13.83 L20.61 14.07 L20.06 14.27 L19.59 14.47 L19.26 14.68 L19.07 14.93 L19.03 15.24 L19.11 15.62 L19.30 16.09 L19.55 16.63 L19.82 17.22 L20.04 17.84 L20.19 18.46 L20.22 19.02 L20.12 19.51 L19.88 19.88 L19.51 20.12 L19.02 20.22 L18.46 20.19 L17.84 20.04 L17.22 19.82 L16.63 19.55 L16.09 19.30 L15.62 19.11 L15.24 19.03 L14.93 19.07 L14.68 19.26 L14.47 19.59 L14.27 20.06 L14.07 20.61 L13.83 21.22 L13.56 21.82 L13.23 22.36 L12.85 22.78 L12.43 23.06 L12.00 23.15 L11.57 23.06 L11.15 22.78 L10.77 22.36 L10.44 21.82 L10.17 21.22 L9.93 20.61 L9.73 20.06 L9.53 19.59 L9.32 19.26 L9.07 19.07 L8.76 19.03 L8.38 19.11 L7.91 19.30 L7.37 19.55 L6.78 19.82 L6.16 20.04 L5.54 20.19 L4.98 20.22 L4.49 20.12 L4.12 19.88 L3.88 19.51 L3.78 19.02 L3.81 18.46 L3.96 17.84 L4.18 17.22 L4.45 16.63 L4.70 16.09 L4.89 15.62 L4.97 15.24 L4.93 14.93 L4.74 14.68 L4.41 14.47 L3.94 14.27 L3.39 14.07 L2.78 13.83 L2.18 13.56 L1.64 13.23 L1.22 12.85 L0.94 12.43 L0.85 12.00 L0.94 11.57 L1.22 11.15 L1.64 10.77 L2.18 10.44 L2.78 10.17 L3.39 9.93 L3.94 9.73 L4.41 9.53 L4.74 9.32 L4.93 9.07 L4.97 8.76 L4.89 8.38 L4.70 7.91 L4.45 7.37 L4.18 6.78 L3.96 6.16 L3.81 5.54 L3.78 4.98 L3.88 4.49 L4.12 4.12 L4.49 3.88 L4.98 3.78 L5.54 3.81 L6.16 3.96 L6.78 4.18 L7.37 4.45 L7.91 4.70 L8.38 4.89 L8.76 4.97 L9.07 4.93 L9.32 4.74 L9.53 4.41 L9.73 3.94 L9.93 3.39 L10.17 2.78 L10.44 2.18 L10.77 1.64 L11.15 1.22 L11.57 0.94 L12.00 0.85Z"/><circle cx="12" cy="12" r="3.7"/></g></svg>
<div class="a" style="left:808px;top:1326px;width:24px;height:24px;background:#EED6D6;border-radius:4px"></div>
<svg class="a" style="left:844px;top:1332px;overflow:visible;" width="10" height="14" viewBox="0 0 10 14" fill="none"><path d="M3 2.5L7.5 7L3 11.5" stroke="#3E3446" stroke-width="2" stroke-linecap="round" stroke-linejoin="round"/></svg>
<div class="t" style="top:1326.07px;font-size:24.6px;color:#3A3044;font-weight:400;font-family:'Liberation Sans',sans-serif;left:864.50px;">_GzipReader.read</div>
<div class="a" style="left:432px;top:1362px;width:30px;height:48px;background:#FCF6E5"></div>
<div class="a" style="left:432px;top:1408px;width:30px;height:2px;background:#E9C462"></div>
<div class="a" style="left:760px;top:1362px;width:30px;height:48px;background:#FCF6E5"></div>
<div class="a" style="left:760px;top:1408px;width:30px;height:2px;background:#E9C462"></div>
<div class="t" style="top:1374.92px;font-size:23.6px;color:#3A3044;font-weight:400;font-family:'Liberation Sans',sans-serif;letter-spacing:-0.2px;left:-1162.00px;width:1500px;text-align:right;">9.99ms</div>
<div class="t" style="top:1375.43px;font-size:23px;color:#716382;font-weight:400;font-family:'Liberation Sans',sans-serif;letter-spacing:-0.2px;left:-1055.00px;width:1500px;text-align:right;">9.1%</div>
<div class="t" style="top:1374.92px;font-size:23.6px;color:#3A3044;font-weight:400;font-family:'Liberation Sans',sans-serif;letter-spacing:-0.2px;left:-870.00px;width:1500px;text-align:right;">9.99ms</div>
<div class="t" style="top:1375.43px;font-size:23px;color:#716382;font-weight:400;font-family:'Liberation Sans',sans-serif;letter-spacing:-0.2px;left:-763.00px;width:1500px;text-align:right;">9.1%</div>
<svg class="a" style="left:752.5px;top:1374px;overflow:visible;" width="24" height="24" viewBox="0 0 24 24" fill="none"><g stroke="#4A3F55" stroke-width="1.6" stroke-linejoin="round"><path d="M12.00 0.85 L12.43 0.94 L12.85 1.22 L13.23 1.64 L13.56 2.18 L13.83 2.78 L14.07 3.39 L14.27 3.94 L14.47 4.41 L14.68 4.74 L14.93 4.93 L15.24 4.97 L15.62 4.89 L16.09 4.70 L16.63 4.45 L17.22 4.18 L17.84 3.96 L18.46 3.81 L19.02 3.78 L19.51 3.88 L19.88 4.12 L20.12 4.49 L20.22 4.98 L20.19 5.54 L20.04 6.16 L19.82 6.78 L19.55 7.37 L19.30 7.91 L19.11 8.38 L19.03 8.76 L19.07 9.07 L19.26 9.32 L19.59 9.53 L20.06 9.73 L20.61 9.93 L21.22 10.17 L21.82 10.44 L22.36 10.77 L22.78 11.15 L23.06 11.57 L23.15 12.00 L23.06 12.43 L22.78 12.85 L22.36 13.23 L21.82 13.56 L21.22 13.83 L20.61 14.07 L20.06 14.27 L19.59 14.47 L19.26 14.68 L19.07 14.93 L19.03 15.24 L19.11 15.62 L19.30 16.09 L19.55 16.63 L19.82 17.22 L20.04 17.84 L20.19 18.46 L20.22 19.02 L20.12 19.51 L19.88 19.88 L19.51 20.12 L19.02 20.22 L18.46 20.19 L17.84 20.04 L17.22 19.82 L16.63 19.55 L16.09 19.30 L15.62 19.11 L15.24 19.03 L14.93 19.07 L14.68 19.26 L14.47 19.59 L14.27 20.06 L14.07 20.61 L13.83 21.22 L13.56 21.82 L13.23 22.36 L12.85 22.78 L12.43 23.06 L12.00 23.15 L11.57 23.06 L11.15 22.78 L10.77 22.36 L10.44 21.82 L10.17 21.22 L9.93 20.61 L9.73 20.06 L9.53 19.59 L9.32 19.26 L9.07 19.07 L8.76 19.03 L8.38 19.11 L7.91 19.30 L7.37 19.55 L6.78 19.82 L6.16 20.04 L5.54 20.19 L4.98 20.22 L4.49 20.12 L4.12 19.88 L3.88 19.51 L3.78 19.02 L3.81 18.46 L3.96 17.84 L4.18 17.22 L4.45 16.63 L4.70 16.09 L4.89 15.62 L4.97 15.24 L4.93 14.93 L4.74 14.68 L4.41 14.47 L3.94 14.27 L3.39 14.07 L2.78 13.83 L2.18 13.56 L1.64 13.23 L1.22 12.85 L0.94 12.43 L0.85 12.00 L0.94 11.57 L1.22 11.15 L1.64 10.77 L2.18 10.44 L2.78 10.17 L3.39 9.93 L3.94 9.73 L4.41 9.53 L4.74 9.32 L4.93 9.07 L4.97 8.76 L4.89 8.38 L4.70 7.91 L4.45 7.37 L4.18 6.78 L3.96 6.16 L3.81 5.54 L3.78 4.98 L3.88 4.49 L4.12 4.12 L4.49 3.88 L4.98 3.78 L5.54 3.81 L6.16 3.96 L6.78 4.18 L7.37 4.45 L7.91 4.70 L8.38 4.89 L8.76 4.97 L9.07 4.93 L9.32 4.74 L9.53 4.41 L9.73 3.94 L9.93 3.39 L10.17 2.78 L10.44 2.18 L10.77 1.64 L11.15 1.22 L11.57 0.94 L12.00 0.85Z"/><circle cx="12" cy="12" r="3.7"/></g></svg>
<div class="a" style="left:808px;top:1374px;width:24px;height:24px;background:#EED6D6;border-radius:4px"></div>
<svg class="a" style="left:844px;top:1380px;overflow:visible;" width="10" height="14" viewBox="0 0 10 14" fill="none"><path d="M3 2.5L7.5 7L3 11.5" stroke="#3E3446" stroke-width="2" stroke-linecap="round" stroke-linejoin="round"/></svg>
<div class="t" style="top:1374.07px;font-size:24.6px;color:#3A3044;font-weight:400;font-family:'Liberation Sans',sans-serif;left:864.50px;">_recv</div>
<div class="a" style="left:432px;top:1410px;width:30px;height:48px;background:#FCF6E5"></div>
<div class="a" style="left:432px;top:1456px;width:30px;height:2px;background:#E9C462"></div>
<div class="a" style="left:760px;top:1410px;width:30px;height:48px;background:#FCF6E5"></div>
<div class="a" style="left:760px;top:1456px;width:30px;height:2px;background:#E9C462"></div>
<div class="t" style="top:1422.92px;font-size:23.6px;color:#3A3044;font-weight:400;font-family:'Liberation Sans',sans-serif;letter-spacing:-0.2px;left:-1162.00px;width:1500px;text-align:right;">9.99ms</div>
<div class="t" style="top:1423.43px;font-size:23px;color:#716382;font-weight:400;font-family:'Liberation Sans',sans-serif;letter-spacing:-0.2px;left:-1055.00px;width:1500px;text-align:right;">9.1%</div>
<div class="t" style="top:1422.92px;font-size:23.6px;color:#3A3044;font-weight:400;font-family:'Liberation Sans',sans-serif;letter-spacing:-0.2px;left:-870.00px;width:1500px;text-align:right;">9.99ms</div>
<div class="t" style="top:1423.43px;font-size:23px;color:#716382;font-weight:400;font-family:'Liberation Sans',sans-serif;letter-spacing:-0.2px;left:-763.00px;width:1500px;text-align:right;">9.1%</div>
<svg class="a" style="left:752.5px;top:1422px;overflow:visible;" width="24" height="24" viewBox="0 0 24 24" fill="none"><g stroke="#4A3F55" stroke-width="1.6" stroke-linejoin="round"><circle cx="12" cy="7.5" r="5.8"/><path d="M2 22.5V19.5A5 5 0 0 1 7 14.5H17A5 5 0 0 1 22 19.5V22.5Z"/></g></svg>
<div class="a" style="left:808px;top:1422px;width:24px;height:24px;background:#D0D1F3;border-radius:4px"></div>
<svg class="a" style="left:844px;top:1428px;overflow:visible;" width="10" height="14" viewBox="0 0 10 14" fill="none"><path d="M3 2.5L7.5 7L3 11.5" stroke="#3E3446" stroke-width="2" stroke-linecap="round" stroke-linejoin="round"/></svg>
<div class="t" style="top:1422.07px;font-size:24.6px;color:#3A3044;font-weight:400;font-family:'Liberation Sans',sans-serif;left:864.50px;">md5hash</div>
<div class="a" style="left:136px;top:1416px;width:2850px;height:50px;background:linear-gradient(to bottom,rgba(43,34,51,0),rgba(43,34,51,0.045));-webkit-mask-image:linear-gradient(to right,transparent 0%,#000 35%,#000 70%,transparent 100%)"></div>
<div class="t" style="top:1126.83px;font-size:24.3px;color:#3A3044;font-weight:700;font-family:'Liberation Sans',sans-serif;left:2486.00px;">Trace</div>
<div class="a" style="left:2486px;top:1164px;width:64px;height:4px;background:#6C5FC7"></div>
<div class="t" style="top:1125.98px;font-size:25.3px;color:#3A3044;font-weight:400;font-family:'Liberation Sans',sans-serif;left:2570.00px;">Environment</div>
<div class="t" style="top:1176.58px;font-size:24px;color:#3A3044;font-weight:700;font-family:'Liberation Sans',sans-serif;left:2486.00px;">Transaction:</div>
<div class="t" style="top:1176.16px;font-size:24.5px;color:#2F62D6;font-weight:400;font-family:'Liberation Sans',sans-serif;letter-spacing:0.6px;left:2638.60px;">/api/0/organizations/{organ…</div>
<div class="t" style="top:1210.08px;font-size:24px;color:#3A3044;font-weight:700;font-family:'Liberation Sans',sans-serif;left:2486.00px;">Timestamp:</div>
<div class="t" style="top:1209.66px;font-size:24.5px;color:#3A3044;font-weight:400;font-family:'Liberation Sans',sans-serif;left:2631.00px;">Apr 2, 10:05 AM</div>
<div class="t" style="top:1243.58px;font-size:24px;color:#3A3044;font-weight:700;font-family:'Liberation Sans',sans-serif;left:2486.00px;">Project:</div>
<div class="t" style="top:1243.16px;font-size:24.5px;color:#2F62D6;font-weight:400;font-family:'Liberation Sans',sans-serif;left:2617.70px;">sentry</div>
<div class="t" style="top:1277.08px;font-size:24px;color:#3A3044;font-weight:700;font-family:'Liberation Sans',sans-serif;left:2486.00px;">Release:</div>
<div class="t" style="top:1276.66px;font-size:24.5px;color:#2F62D6;font-weight:400;font-family:'Liberation Sans',sans-serif;left:2591.80px;">87aab1d9cfa0</div>
<div class="t" style="top:1310.58px;font-size:24px;color:#3A3044;font-weight:700;font-family:'Liberation Sans',sans-serif;left:2486.00px;">Environment:</div>
<div class="t" style="top:1310.16px;font-size:24.5px;color:#3A3044;font-weight:400;font-family:'Liberation Sans',sans-serif;left:2651.00px;">de</div>
<div class="t" style="top:1344.08px;font-size:24px;color:#3A3044;font-weight:700;font-family:'Liberation Sans',sans-serif;left:2486.00px;">Duration:</div>
<div class="t" style="top:1343.66px;font-size:24.5px;color:#3A3044;font-weight:400;font-family:'Liberation Sans',sans-serif;left:2602.00px;">119.28ms</div>
<div class="t" style="top:1377.58px;font-size:24px;color:#3A3044;font-weight:700;font-family:'Liberation Sans',sans-serif;left:2486.00px;">Threads:</div>
<div class="t" style="top:1377.16px;font-size:24.5px;color:#3A3044;font-weight:400;font-family:'Liberation Sans',sans-serif;left:2595.00px;">20</div>
<div class="a" style="left:2592px;top:1299px;width:163px;height:2px;background:repeating-linear-gradient(to right,#3b6ad8 0 2px,transparent 2px 4px)"></div>
<div class="a" style="left:2585px;top:1244px;width:24px;height:24px;background:#6A9BD1;border-radius:5px"></div>
<svg class="a" style="left:2587px;top:1246px;overflow:visible;" width="20" height="20" viewBox="0 0 20 20" fill="none"><path fill="#fff" d="M9.8 2C6.5 2 6.7 3.4 6.7 3.4V5H9.9V5.5H5.4S3.2 5.3 3.2 8.7S5.1 12 5.1 12H6.3V10.4S6.2 8.4 8.3 8.4H11.5S13.4 8.4 13.4 6.6V3.6S13.7 2 9.8 2ZM8 3A.6.6 0 1 1 8 4.2A.6.6 0 1 1 8 3Z"/><path fill="#fff" d="M10.2 18C13.5 18 13.3 16.6 13.3 16.6V15H10.1V14.5H14.6S16.8 14.7 16.8 11.3S14.9 8 14.9 8H13.7V9.6S13.8 11.6 11.7 11.6H8.5S6.6 11.6 6.6 13.4V16.4S6.3 18 10.2 18ZM12 17A.6.6 0 1 1 12 15.8A.6.6 0 1 1 12 17Z"/></svg>
</body></html>
